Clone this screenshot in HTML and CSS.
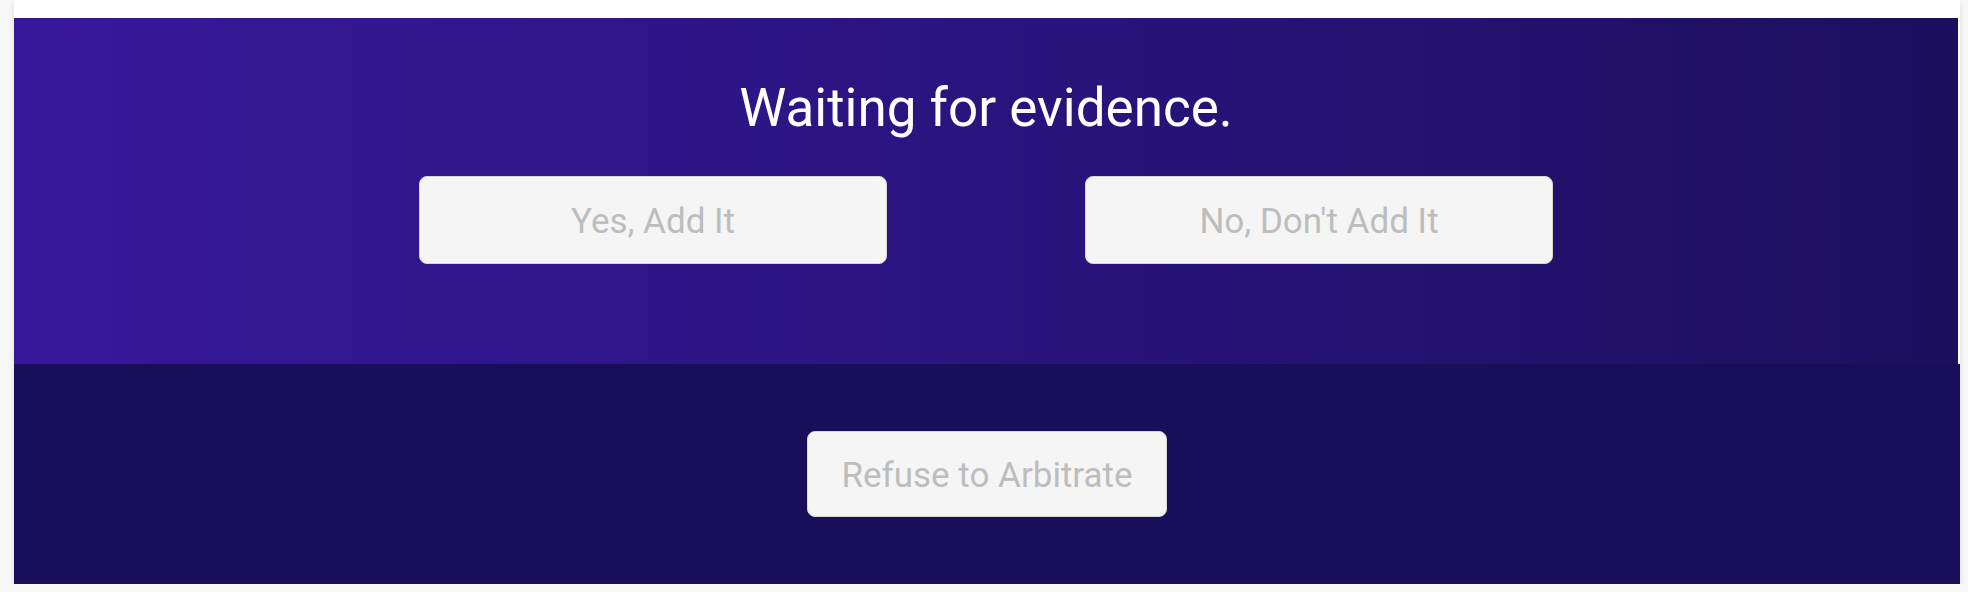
FILE: index.html
```html
<!DOCTYPE html>
<html lang="en">
<head>
    <meta charset="UTF-8">
    <meta name="viewport" content="width=device-width, initial-scale=1.0">
    <title>Arbitration</title>
    <link rel="stylesheet" href="styles.css">
</head>
<body>
    <div class="card">
        <section class="evidence-section">
            <h1>Waiting for evidence.</h1>
            <div class="choice-row">
                <button class="choice-btn" disabled>Yes, Add It</button>
                <button class="choice-btn" disabled>No, Don't Add It</button>
            </div>
        </section>
        <section class="refuse-section">
            <button class="refuse-btn" disabled>Refuse to Arbitrate</button>
        </section>
    </div>
</body>
</html>
```
FILE: styles.css
```css
body {
    margin: 0;
    padding: 0;
    background: #f8f8f8;
    font-family: 'Roboto', 'Liberation Sans', sans-serif;
}

.card {
    width: 1946px;
    margin-left: 14px;
    padding-top: 18px;
    background: #ffffff;
    box-shadow: 0 2px 6px rgba(0, 0, 0, 0.12);
}

.evidence-section {
    height: 346px;
    margin-right: 2px;
    box-sizing: border-box;
    padding-top: 60px;
    background: linear-gradient(to right, #38189a, #2c1584 40%, #1c0f5e);
    text-align: center;
}

h1 {
    margin: 0 0 38px;
    font-size: 53px;
    line-height: 60px;
    font-weight: 400;
    color: #ffffff;
}

.choice-row {
    display: flex;
    justify-content: center;
    gap: 198px;
}

button {
    background: #f5f5f5;
    border: 1px solid #d6d6d6;
    border-radius: 8px;
    color: #bdbdbd;
    font-family: 'Roboto', 'Liberation Sans', sans-serif;
    font-size: 35px;
    padding: 3px 0 0;
}

.choice-btn {
    width: 468px;
    height: 88px;
}

.refuse-section {
    height: 220px;
    display: flex;
    justify-content: center;
    align-items: center;
    background: #190e5a;
}

.refuse-btn {
    width: 360px;
    height: 86px;
}
```
